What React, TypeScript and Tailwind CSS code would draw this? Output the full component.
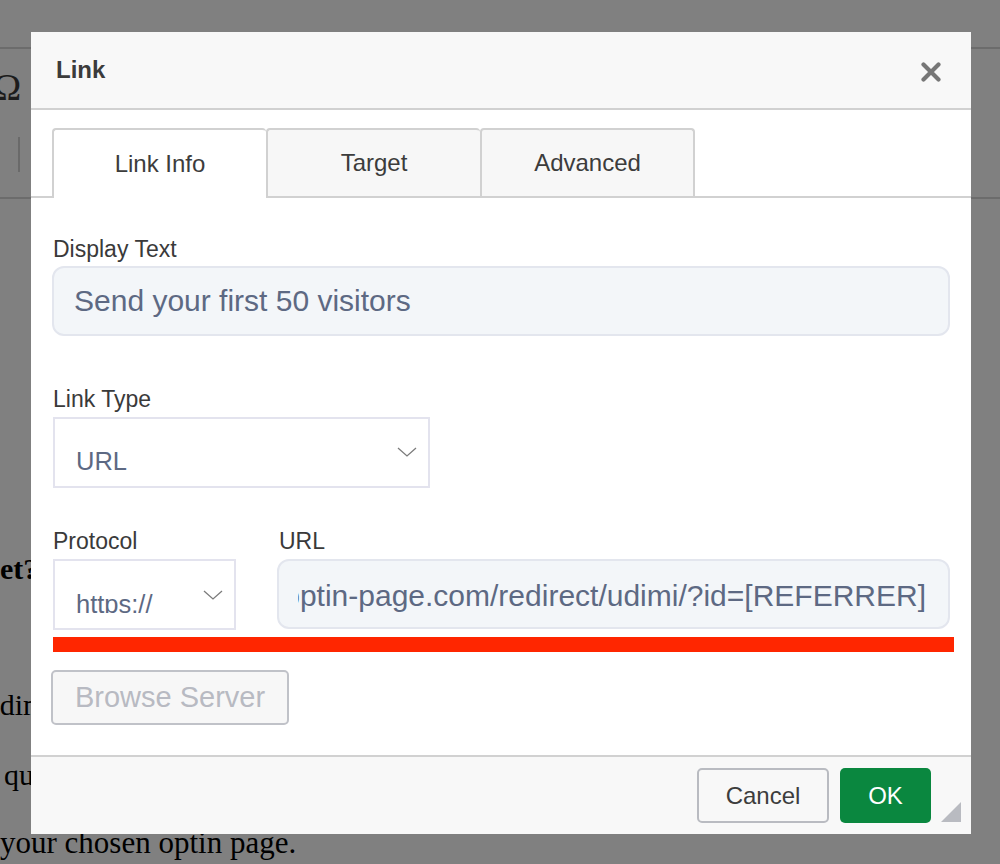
function Chevron({ className = "" }: { className?: string }) {
  return (
    <svg width="20" height="10" viewBox="0 0 20 10" className={className} fill="none">
      <polyline points="1,1 10,9 19,1" stroke="#7b7b7b" strokeWidth="1.3" />
    </svg>
  );
}

export default function App() {
  return (
    <div className="relative h-[864px] w-[1000px] overflow-hidden bg-[#808080] font-['Liberation_Serif','Times_New_Roman',serif] text-black">
      {/* dimmed editor page behind the dialog */}
      <div className="h-[47px]" />
      <div className="h-[150px] border-t-2 border-[#6c6c6c]">
        <div className="ml-[-7px] mt-[19px] h-[38px] text-[38px] leading-[38px] text-[#1c1c1c]">Ω</div>
        <div className="ml-[18px] mt-[31px] h-[35px] w-[2px] bg-[#6a6a6a]" />
      </div>
      <div className="border-t-2 border-[#6c6c6c]" />
      <div className="mt-[352px] whitespace-nowrap text-[30px] font-bold leading-[36px]">et?</div>
      <div className="ml-[-22px] mt-[100px] whitespace-nowrap text-[30px] leading-[36px]">Udimi</div>
      <div className="ml-[4px] mt-[34px] whitespace-nowrap text-[30px] leading-[36px]">quickly</div>
      <div className="mt-[32px] whitespace-nowrap text-[31px] leading-[36px]">your chosen optin page.</div>

      {/* dialog */}
      <div className="absolute left-[31px] top-[32px] flex h-[802px] w-[940px] flex-col bg-white font-['Liberation_Sans',Arial,Helvetica,sans-serif]">
        <div className="flex h-[78px] shrink-0 items-center justify-between border-b-2 border-[#d1d1d1] bg-[#f8f8f8] pl-[25px] pr-[30px]">
          <span className="text-[24px] font-bold text-[#3b3b3b]">Link</span>
          <svg width="20" height="20" viewBox="0 0 20 20" className="mt-[3px]">
            <path d="M2.5 2.5 L17.5 17.5 M17.5 2.5 L2.5 17.5" stroke="#777777" strokeWidth="4.2" strokeLinecap="round" />
          </svg>
        </div>

        <div className="mt-[18px] flex h-[70px] shrink-0 items-end border-b-2 border-[#d1d1d1] pl-[21px]">
          <div className="-mb-[2px] flex h-[70px] w-[214px] items-center justify-center rounded-t-[4px] border-l-2 border-t-2 border-[#d1d1d1] bg-white text-[24px] text-[#3c3c3c]">
            Link Info
          </div>
          <div className="flex h-[68px] w-[214px] items-center justify-center rounded-t-[4px] border-l-2 border-t-2 border-[#d1d1d1] bg-[#f7f7f7] text-[24px] text-[#3c3c3c]">
            Target
          </div>
          <div className="flex h-[68px] w-[215px] items-center justify-center rounded-t-[4px] border-l-2 border-r-2 border-t-2 border-[#d1d1d1] bg-[#f7f7f7] text-[24px] text-[#3c3c3c]">
            Advanced
          </div>
        </div>

        <div className="flex flex-col px-[21px]">
          <label className="ml-[1px] mt-[37px] text-[23px] leading-[28px] text-[#3a3a3a]">Display Text</label>
          <div className="mt-[3px] flex h-[70px] items-center rounded-[12px] border-2 border-[#e3e6ee] bg-[#f3f6f9] pl-[20px] text-[30px] leading-[34px] text-[#5d6983]">
            Send your first 50 visitors
          </div>

          <label className="ml-[1px] mt-[49px] text-[23px] leading-[28px] text-[#3a3a3a]">Link Type</label>
          <div className="ml-[1px] mt-[4px] flex h-[71px] w-[377px] items-start justify-between border-2 border-[#e3e3ee] bg-white pl-[21px] pr-[11px]">
            <span className="mt-[27px] text-[25.5px] leading-[30px] text-[#5d6983]">URL</span>
            <Chevron className="mt-[28px]" />
          </div>

          <div className="mt-[39px] flex">
            <div className="ml-[1px] flex w-[183px] flex-col">
              <label className="text-[23px] leading-[28px] text-[#3a3a3a]">Protocol</label>
              <div className="mt-[4px] flex h-[71px] items-start justify-between border-2 border-[#e3e3ee] bg-white pl-[21px] pr-[11px]">
                <div className="h-[52px] overflow-hidden">
                  <div className="pt-[28px] text-[25.5px] leading-[30px] text-[#5d6983]">https://</div>
                </div>
                <Chevron className="mt-[29px]" />
              </div>
            </div>
            <div className="ml-[41px] flex min-w-0 flex-1 flex-col">
              <label className="ml-[2px] text-[23px] leading-[28px] text-[#3a3a3a]">URL</label>
              <div className="mt-[4px] flex h-[70px] items-center rounded-[12px] border-2 border-[#e3e6ee] bg-[#f3f6f9] pl-[19px] pr-[22px]">
                <div className="flex min-w-0 flex-1 justify-end overflow-hidden pt-[4px]">
                  <span className="shrink-0 whitespace-nowrap text-[30px] leading-[34px] text-[#5d6983]">
                    www.optin-page.com/redirect/udimi/?id=[REFERRER]
                  </span>
                </div>
              </div>
            </div>
          </div>

          <div className="ml-[1px] mr-[-4px] mt-[7px] h-[15px] bg-[#ff2600]" />

          <div className="ml-[-1px] mt-[18px] flex h-[55px] w-[238px] items-center justify-center rounded-[5px] border-2 border-[#c0c2c8] bg-[#f7f7f7] text-[29px] text-[#b8bac2]">
            Browse Server
          </div>
        </div>

        <div className="relative mt-auto flex h-[79px] shrink-0 items-center justify-end gap-[11px] border-t-2 border-[#d1d1d1] bg-[#f8f8f8] pr-[40px]">
          <div className="flex h-[55px] w-[132px] items-center justify-center rounded-[5px] border-2 border-[#b9bbc1] bg-[#f8f8f8] text-[24px] text-[#3d3d3d]">
            Cancel
          </div>
          <div className="flex h-[55px] w-[91px] items-center justify-center rounded-[5px] bg-[#0a873f] text-[24px] text-white">
            OK
          </div>
          <svg width="20" height="20" viewBox="0 0 20 20" className="absolute bottom-[12px] right-[10px]">
            <polygon points="20,0 20,20 0,20" fill="#b9bbc1" />
          </svg>
        </div>
      </div>
    </div>
  );
}
